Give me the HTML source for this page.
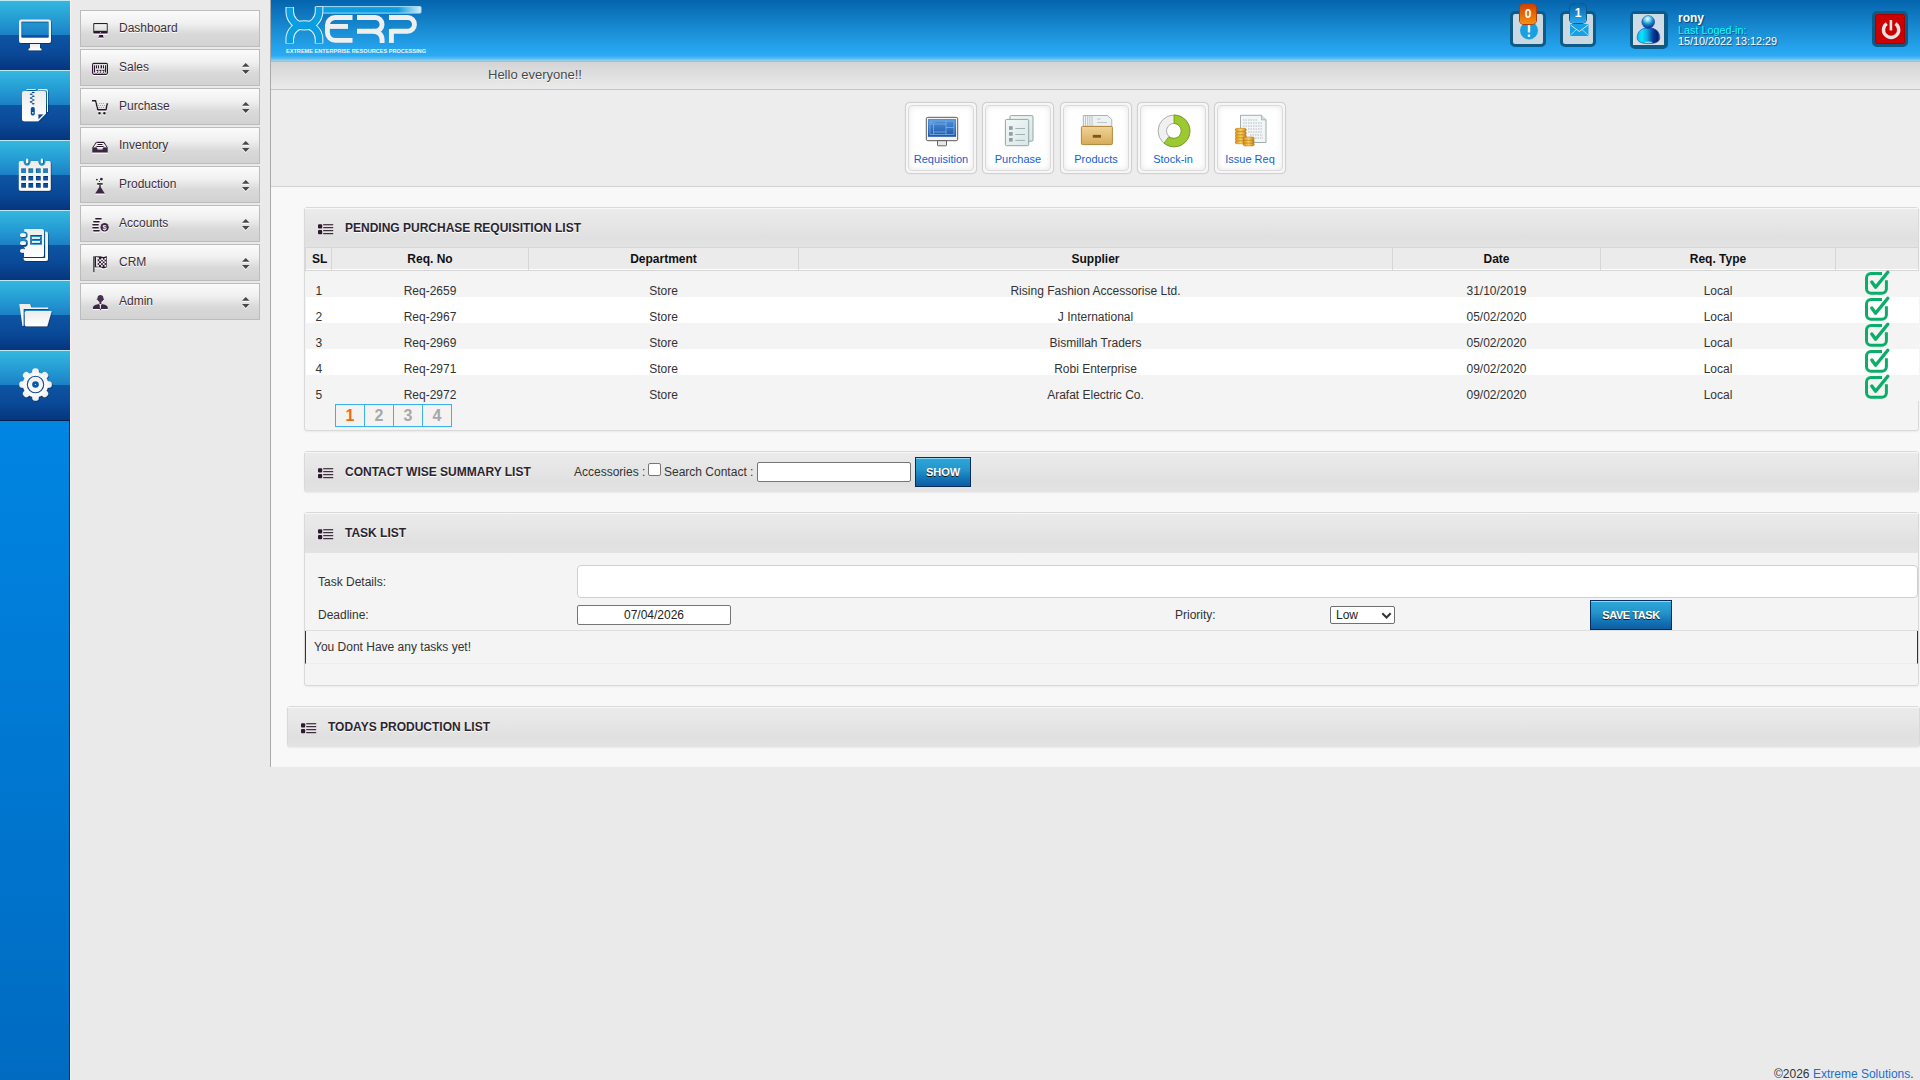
<!DOCTYPE html>
<html><head><meta charset="utf-8"><title>XERP</title>
<style>
*{box-sizing:border-box;margin:0;padding:0}
html,body{width:1920px;height:1080px;overflow:hidden;background:#eaeaea;font-family:"Liberation Sans",sans-serif;font-size:12px;color:#333}
.abs{position:absolute}
/* left bar */
#lbar{position:absolute;left:0;top:0;width:70px;height:1080px;background:linear-gradient(#0085e3 421px,#006bc1 1080px);border-right:1px solid #06325f}
#lbar2{position:absolute;left:70px;top:0;width:1px;height:1080px;background:#f6f0ee}
.tile{position:absolute;left:0;width:70px;height:70px;border-top:1px solid #bfe9f7;
 background:linear-gradient(#33b8e0 0%,#2398d2 30%,#1c80c6 49%,#0d54a3 50%,#0a4a98 75%,#06357f 100%)}
.tile svg{position:absolute;left:0;top:0}
/* menu */
.mbtn{position:absolute;left:80px;width:180px;height:37px;border:1px solid #bcbcbc;background:linear-gradient(#fbfbfb,#f0f0f0 35%,#d9d9d9 65%,#d2d2d2);}
.mbtn .t{position:absolute;left:38px;top:10px;font-size:12px;color:#3b2e3b;text-shadow:0 1px 0 #fff}
.mbtn svg.i{position:absolute;left:11px;top:9px}
.mbtn .ar{position:absolute;left:161px;top:15px}
#vline{position:absolute;left:270px;top:0;width:1px;height:767px;background:#a9a9a9}
/* header */
#hdr{position:absolute;left:271px;top:0;width:1649px;height:61px;background:linear-gradient(#0464ad 0%,#1a8dd4 50%,#29acf5 91%,#4fb8f0 95%,#9fd0ea 100%)}
#gbar{position:absolute;left:271px;top:61px;width:1649px;height:29px;border-top:1px solid #bdb9b9;border-bottom:1px solid #c4c4c4;background:linear-gradient(#d4d4d4,#ebebeb)}
#hello{position:absolute;left:488px;top:67px;font-size:13px;color:#484848;text-shadow:0 1px 1px #fff}
#tbar{position:absolute;left:271px;top:90px;width:1649px;height:97px;background:#ededed;border-bottom:1px solid #d2d2d2}
#content{position:absolute;left:271px;top:187px;width:1649px;height:580px;background:#f8f8f8}
.qb{position:absolute;top:102px;width:72px;height:72px;border:1px solid #d0d0d0;border-radius:5px;background:#f6f6f6;padding:2px;box-shadow:0 0 1px #ccc}
.qb .in{position:absolute;left:2px;top:2px;right:2px;bottom:2px;border:1px solid #dadada;border-radius:4px;background:#fff;box-shadow:inset 0 0 6px #e6e6e6}
.qb .lbl{position:absolute;left:0;right:0;top:50px;text-align:center;font-size:11px;color:#1262cc}
.qb svg{position:absolute;left:19px;top:11px}
/* notif */
.nbox{position:absolute;top:11px;width:36px;height:36px;border:3px solid #0d5b88;border-radius:5px;background:#c9d8e1}
.badge{position:absolute;width:18px;height:20px;border-radius:4px;color:#fff;font-weight:bold;font-size:12px;text-align:center;line-height:20px}
/* panels */
.panel{position:absolute;left:304px;width:1615px;border:1px solid #d9d9d9;border-radius:3px;background:#f4f4f4;box-shadow:0 1px 2px rgba(0,0,0,0.06)}
.ph{position:absolute;left:0;top:0;right:0;height:40px;background:linear-gradient(#ebebeb,#e6e6e6 40%,#e0e0e0 75%,#e3e3e3);box-shadow:inset 0 1px 0 #f7f7f7}
.ph .tt{position:absolute;left:40px;top:13px;font-size:12px;font-weight:bold;color:#2b2530;text-shadow:0 1px 0 #fff;letter-spacing:0}
.ph svg{position:absolute;left:13px;top:16px}
table.rq{position:absolute;left:0;top:39px;border-collapse:collapse;width:1613px;table-layout:fixed}
table.rq th{height:23px;background:#ebebeb;border:1px solid #d6d6d6;box-shadow:inset 0 -1px 0 #fff;font-weight:bold;font-size:12px;color:#111;text-align:center;padding:0}
table.rq td{height:26px;text-align:center;font-size:12px;color:#333;padding:0;vertical-align:bottom;line-height:12px}
table.rq tr.o td{background:#f4f4f4}
table.rq tr.e td{background:#fff}
.pg{position:absolute;top:404px;width:30px;height:23px;border:1px solid #39b3e6;text-align:center;font-weight:bold;font-size:16px;line-height:22px;color:#a8a8a8;background:#f5f3f2}
.btnb{position:absolute;border:1px solid #062d5e;background:linear-gradient(#2ea7da,#2496cc 40%,#1477b8 70%,#0f5ca2);box-shadow:inset 0 1px 0 #92d6f4;color:#fff;font-weight:bold;font-size:11px;text-align:center;text-shadow:0 1px 0 #1a1a1a}
</style></head>
<body>
<div id="lbar"></div><div id="lbar2"></div>
<div class="tile" style="top:0"></div>
<div class="tile" style="top:70px"></div>
<div class="tile" style="top:140px"></div>
<div class="tile" style="top:210px"></div>
<div class="tile" style="top:280px"></div>
<div class="tile" style="top:350px;border-bottom:1px solid #05204a;height:71px"></div>


<!-- tile icons -->
<svg class="abs" style="left:0;top:0" width="70" height="420" viewBox="0 0 70 420">
 <defs>
  <filter id="tsh" x="-20%" y="-20%" width="140%" height="140%"><feDropShadow dx="0.6" dy="0.8" stdDeviation="0.7" flood-color="#042050" flood-opacity="0.7"/></filter>
  <linearGradient id="wg" x1="0" y1="0" x2="0" y2="1"><stop offset="0" stop-color="#ececec"/><stop offset="1" stop-color="#ffffff"/></linearGradient>
 </defs>
 <g filter="url(#tsh)" fill="url(#wg)">
  <!-- monitor -->
  <path fill-rule="evenodd" d="M21.5,19.5 H48.5 A2.5,2.5 0 0 1 51,22 V40.5 A2.5,2.5 0 0 1 48.5,43 H21.5 A2.5,2.5 0 0 1 19,40.5 V22 A2.5,2.5 0 0 1 21.5,19.5 Z M22.5,21.5 A1,1 0 0 0 21.2,22.5 V36.6 A1,1 0 0 0 22.5,37.8 H47.5 A1,1 0 0 0 48.8,36.6 V22.5 A1,1 0 0 0 47.5,21.5 Z"/>
  <path d="M30,44 H40 V48 L41.5,49 V50.2 H28.5 V49 L30,48 Z"/>
  <!-- zip -->
  <path d="M26.5,89 H35.5 V90 H26.5 Z M38,89 H46 A2,2 0 0 1 48,91 V112 H47 V91.8 A1.5,1.5 0 0 0 45.5,90.3 H38 Z" />
  <path fill-rule="evenodd" d="M24,91 H44 A2,2 0 0 1 46,93 V113.5 L38.3,121.2 H24 A2,2 0 0 1 22,119.2 V93 A2,2 0 0 1 24,91 Z M38.3,114.3 V119.5 L43.6,114.3 Z"/>
  
  <path fill-rule="evenodd" d="M20.5,161 H23.4 A3.7,4.8 0 0 0 30.8,161 H38.2 A3.7,4.8 0 0 0 45.6,161 H49 A1.7,1.7 0 0 1 50.7,162.7 V189 A1.7,1.7 0 0 1 49,190.7 H20.5 A1.7,1.7 0 0 1 18.8,189 V162.7 A1.7,1.7 0 0 1 20.5,161 Z
   M21.1,168.3 h4.9 v4.6 h-4.9 Z M28.3,168.3 h4.9 v4.6 h-4.9 Z M35.9,168.3 h4.9 v4.6 h-4.9 Z M43.1,168.3 h4.9 v4.6 h-4.9 Z
   M21.1,175.9 h4.9 v4.6 h-4.9 Z M28.3,175.9 h4.9 v4.6 h-4.9 Z M35.9,175.9 h4.9 v4.6 h-4.9 Z M43.1,175.9 h4.9 v4.6 h-4.9 Z
   M21.1,183.1 h4.9 v4.6 h-4.9 Z M28.3,183.1 h4.9 v4.6 h-4.9 Z M35.9,183.1 h4.9 v4.6 h-4.9 Z M43.1,183.1 h4.9 v4.6 h-4.9 Z"/>
  <rect x="26" y="158.6" width="2.2" height="4.7" rx="1"/>
  <rect x="40.8" y="158.6" width="2.2" height="4.7" rx="1"/>
  <!-- notebook -->
  <path fill-rule="evenodd" d="M24.5,229 H42 A2,2 0 0 1 44,231 V255 A2,2 0 0 1 42,257 H24 V251.5 A3.2,3.2 0 0 0 24,247 V247 A3.2,3.2 0 0 0 24,239 A3.2,3.2 0 0 0 24,231.5 Z M30.1,235 H42 V244.8 H30.1 Z"/>
  <path d="M45.2,231.5 A2.5,2.5 0 0 1 48,234 V258.5 A2.5,2.5 0 0 1 45.5,261 H26.5 A3,3 0 0 1 23.5,258 H45.2 Z"/>
  <ellipse cx="23" cy="235" rx="3" ry="2"/><ellipse cx="23" cy="243" rx="3" ry="2"/><ellipse cx="23" cy="250.8" rx="3" ry="2"/>
  <rect x="32" y="237" width="8" height="1.8"/><rect x="32" y="241" width="8" height="1.8"/>
  <!-- folder -->
  <path d="M19.3,304 H30 L31.3,307.5 H47 A0.8,0.8 0 0 1 47.8,309 H23.5 V326 H22.5 Z"/>
  <path d="M26.3,311 H51.7 L47.2,326.2 H26.3 A1.5,1.5 0 0 1 24.8,324.7 V312.5 A1.5,1.5 0 0 1 26.3,311 Z"/>
  <!-- gear -->
  <circle cx="35.5" cy="384.5" r="12.6"/><rect x="32.2" y="368.2" width="6.6" height="8" rx="3" transform="rotate(0 35.5 384.5)"/><rect x="32.2" y="368.2" width="6.6" height="8" rx="3" transform="rotate(45 35.5 384.5)"/><rect x="32.2" y="368.2" width="6.6" height="8" rx="3" transform="rotate(90 35.5 384.5)"/><rect x="32.2" y="368.2" width="6.6" height="8" rx="3" transform="rotate(135 35.5 384.5)"/><rect x="32.2" y="368.2" width="6.6" height="8" rx="3" transform="rotate(180 35.5 384.5)"/><rect x="32.2" y="368.2" width="6.6" height="8" rx="3" transform="rotate(225 35.5 384.5)"/><rect x="32.2" y="368.2" width="6.6" height="8" rx="3" transform="rotate(270 35.5 384.5)"/><rect x="32.2" y="368.2" width="6.6" height="8" rx="3" transform="rotate(315 35.5 384.5)"/>
 </g>
<g fill="#0a4f98">
  <ellipse cx="33.2" cy="92.5" rx="1.5" ry="0.8"/><ellipse cx="31.2" cy="94.3" rx="1.5" ry="0.8"/><ellipse cx="33.2" cy="96.2" rx="1.5" ry="0.8"/><ellipse cx="31.2" cy="98.1" rx="1.5" ry="0.8"/><ellipse cx="33.2" cy="100" rx="1.5" ry="0.8"/><ellipse cx="31.2" cy="101.9" rx="1.5" ry="0.8"/><ellipse cx="33.2" cy="103.7" rx="1.5" ry="0.8"/>
  <rect x="30.8" y="107" width="4" height="8.5" rx="1.8"/></g><rect x="32" y="112" width="1.6" height="1.6" fill="#c8d8e8"/>
<circle cx="35.5" cy="384.5" r="8.2" fill="none" stroke="#0c4a94" stroke-width="1.1"/><circle cx="35.5" cy="384.5" r="3.3" fill="#0c56a6"/><circle cx="35.5" cy="384.5" r="0.6" fill="#f0f0f0"/>
</svg>
<div id="vline"></div>
<div id="hdr"></div>
<div id="gbar"></div>
<div id="hello">Hello everyone!!</div>
<div id="tbar"></div>
<div id="content"></div>


<!-- logo -->
<svg class="abs" style="left:271px;top:0" width="200" height="60" viewBox="271 0 200 60">
 <defs><linearGradient id="barg" x1="0" x2="1" y1="0" y2="0"><stop offset="0" stop-color="#0b9ee0"/><stop offset="0.78" stop-color="#0a9de0"/><stop offset="1" stop-color="#d6eef8"/></linearGradient></defs>
 <rect x="316" y="6.6" width="105" height="6.5" rx="1" fill="url(#barg)" stroke="#a8dcf3" stroke-width="1"/>
 <g fill="none" stroke-linecap="butt">
  <path d="M289.75,7.1 V11.6 A14.65,14.65 0 0 0 319.05,11.6 V6.6" stroke="#e2f2fa" stroke-width="8.6"/>
  <path d="M289.75,43.6 V39.3 A14.65,14.65 0 0 1 319.05,39.3 V43.6" stroke="#e2f2fa" stroke-width="8.6"/>
  <path d="M289.75,7.6 V11.6 A14.65,14.65 0 0 0 319.05,11.6 V7" stroke="#0a9ee0" stroke-width="6.6"/>
  <path d="M289.75,43.1 V39.3 A14.65,14.65 0 0 1 319.05,39.3 V43.1" stroke="#0a9ee0" stroke-width="6.6"/>
 </g>
 <g fill="none" stroke="#efefef" stroke-width="4.9">
  <path d="M352.5,17.55 H335.2 A7.8,7.8 0 0 0 327.4,25.35 V32.6 A7.8,7.8 0 0 0 335.2,40.4 H352.5"/>
  <path d="M327.4,26.45 H348"/>
  <path d="M357,17.55 H375.2 A6.85,6.85 0 0 1 375.2,31.25 H357"/>
  <path d="M373,31.25 A8.5,8.5 0 0 1 382.1,39.5 V42.9"/>
  <path d="M389,17.55 H407.6 A6.85,6.85 0 0 1 407.6,31.25 H391.4"/>
  <path d="M391.4,29 V42.9"/>
 </g>
 <text x="286" y="52.7" font-family="Liberation Sans" font-weight="bold" font-size="5.9" fill="#f4f4f4" textLength="140" lengthAdjust="spacingAndGlyphs">EXTREME ENTERPRISE RESOURCES PROCESSING</text>
</svg>

<!-- notifications -->
<div class="nbox" style="left:1510px"></div>
<svg class="abs" style="left:1519px;top:21px" width="20" height="20" viewBox="0 0 20 20"><circle cx="10" cy="9.5" r="9" fill="#17a0e2"/><rect x="8.8" y="3" width="2.4" height="8.5" fill="#f2f2f2"/><rect x="8.8" y="13.5" width="2.4" height="2.4" fill="#f2f2f2"/></svg>
<div class="badge" style="left:1520px;width:16px;top:4px;background:linear-gradient(#d13f00,#f5900f);box-shadow:0 0 0 1px #b33a05">0</div>
<div class="nbox" style="left:1560px"></div>
<svg class="abs" style="left:1570px;top:24px" width="19" height="12" viewBox="0 0 19 12"><rect x="0" y="0" width="18.5" height="12" rx="1" fill="#17a0e2"/><path d="M0.5,1 L9.25,7.5 L18,1" fill="none" stroke="#d9edf7" stroke-width="0.9"/><path d="M0.5,11 L6.5,5.5 M18,11 L12,5.5" stroke="#d9edf7" stroke-width="0.7"/></svg>
<div class="badge" style="left:1570px;width:16px;top:4px;height:19px;line-height:19px;background:linear-gradient(#0663a8,#2aa9ee);box-shadow:0 0 0 1px #0d5a85">1</div>

<!-- user -->
<div class="abs" style="left:1630px;top:11px;width:38px;height:38px;border:3px solid #0d5b88;border-radius:5px;background:#0d5b88"><div style="position:absolute;left:0;top:0;width:31px;height:31px;background:linear-gradient(#cadbe6,#d9dde0)"></div></div>
<svg class="abs" style="left:1634px;top:14px" width="30" height="31" viewBox="1634 14 30 31">
 <defs>
  <radialGradient id="uh" cx="0.45" cy="0.25" r="0.75"><stop offset="0" stop-color="#ffffff"/><stop offset="0.25" stop-color="#7fe0f8"/><stop offset="0.6" stop-color="#1584c8"/><stop offset="1" stop-color="#0a2f88"/></radialGradient>
  <linearGradient id="ub" x1="0" y1="0" x2="1" y2="0"><stop offset="0" stop-color="#10b8e8"/><stop offset="0.2" stop-color="#00eaff"/><stop offset="0.45" stop-color="#0fa6e0"/><stop offset="0.7" stop-color="#0a3c98"/><stop offset="0.9" stop-color="#06206a"/><stop offset="1" stop-color="#1a60c8"/></linearGradient>
 </defs>
 <path d="M1637.2,38 C1637.2,31 1642,27.8 1648.5,27.8 C1655,27.8 1659.8,31 1659.8,38 C1659.8,42 1655,43.6 1648.5,43.6 C1642,43.6 1637.2,42 1637.2,38 Z" fill="url(#ub)" stroke="#1a3cb0" stroke-width="0.6"/>
 <ellipse cx="1648.5" cy="42.3" rx="4" ry="0.9" fill="#a8e8ff" opacity="0.8"/>
 <circle cx="1648.2" cy="22" r="6.4" fill="url(#uh)" stroke="#1a3cb0" stroke-width="0.5"/>
</svg>
<div class="abs" style="left:1678px;top:11px;font-size:12px;font-weight:bold;color:#fff;line-height:14px;text-shadow:1px 1px 1px rgba(0,30,60,0.6)">rony</div>
<div class="abs" style="left:1678px;top:25px;font-size:10.8px;color:#00ffff;line-height:11px;text-shadow:1px 1px 1px rgba(0,30,60,0.6)">Last Loged-in:</div>
<div class="abs" style="left:1678px;top:36px;font-size:10.8px;color:#fff;line-height:11px;text-shadow:1px 1px 1px rgba(0,30,60,0.6)">15/10/2022 13:12:29</div>

<!-- power -->
<div class="abs" style="left:1872px;top:11px;width:36px;height:36px;border:3px solid #0e5a86;border-radius:5px;background:#cc0000;box-shadow:inset 0 0 0 1px #a80000"></div>
<svg class="abs" style="left:1880px;top:19px" width="22" height="22" viewBox="0 0 22 22"><path d="M6.8,4.6 A7.6,7.6 0 1 0 15.4,4.6" fill="none" stroke="#e4e4e4" stroke-width="3.4"/><rect x="9.6" y="1" width="2.6" height="10.5" fill="#e4e4e4"/></svg>


<!-- quick buttons -->
<div class="qb" style="left:905px"><div class="in"></div><span class="lbl">Requisition</span></div>
<div class="qb" style="left:982px"><div class="in"></div><span class="lbl">Purchase</span></div>
<div class="qb" style="left:1060px"><div class="in"></div><span class="lbl">Products</span></div>
<div class="qb" style="left:1137px"><div class="in"></div><span class="lbl">Stock-in</span></div>
<div class="qb" style="left:1214px"><div class="in"></div><span class="lbl">Issue Req</span></div>
<svg class="abs" style="left:900px;top:110px" width="390" height="40" viewBox="900 110 390 40">
 <defs>
  <linearGradient id="scr" x1="0" y1="0" x2="0" y2="1"><stop offset="0" stop-color="#4f95dc"/><stop offset="1" stop-color="#1d55a8"/></linearGradient>
  <linearGradient id="doc" x1="0" y1="0" x2="1" y2="1"><stop offset="0" stop-color="#f4f8f8"/><stop offset="1" stop-color="#d8e6e6"/></linearGradient>
  <linearGradient id="box" x1="0" y1="0" x2="0" y2="1"><stop offset="0" stop-color="#f0d498"/><stop offset="1" stop-color="#d8aa58"/></linearGradient>
  <linearGradient id="gold" x1="0" y1="0" x2="1" y2="0"><stop offset="0" stop-color="#d89018"/><stop offset="0.5" stop-color="#f8d060"/><stop offset="1" stop-color="#c88010"/></linearGradient>
 </defs>
 <!-- monitor -->
 <rect x="926.3" y="117.3" width="31.4" height="23.4" rx="1.5" fill="#f2f2f2" stroke="#5a5a5a" stroke-width="1"/>
 <rect x="928" y="119" width="28" height="17.8" fill="url(#scr)"/>
 <g fill="none" stroke="#8cb8e8" stroke-width="0.7"><rect x="930" y="121" width="24" height="13.5"/><path d="M930,124 H946 M946,121 V134.5 M933.5,124 V134.5 M946,127.5 H954 M933.5,132 H946"/></g>
 <g fill="#a8c8f0"><circle cx="931.5" cy="122.5" r="0.45"/><circle cx="932.9" cy="122.5" r="0.45"/><circle cx="934.3" cy="122.5" r="0.45"/></g>
 <path d="M937.5,140.7 H946.5 V145 A0.8,0.8 0 0 1 945.7,145.8 H938.3 A0.8,0.8 0 0 1 937.5,145 Z" fill="#e8e8e8" stroke="#555" stroke-width="0.9"/>
 <!-- documents -->
 <rect x="1010" y="115.6" width="23" height="25.6" rx="1.2" fill="url(#doc)" stroke="#8a9c9c" stroke-width="0.9"/>
 <rect x="1005.4" y="119.4" width="23.3" height="26.3" rx="1.2" fill="url(#doc)" stroke="#8a9c9c" stroke-width="0.9"/>
 <g fill="#8f9f9f"><rect x="1009" y="126.2" width="3.7" height="3.6"/><rect x="1009" y="132.1" width="3.7" height="3.6"/><rect x="1009" y="138" width="3.7" height="3.6"/></g>
 <g stroke="#9aaaaa" stroke-width="0.9"><path d="M1015.3,128.5 H1025 M1015.3,134.5 H1025 M1015.3,140.4 H1025"/></g>
 <!-- products drawer -->
 <path d="M1083.3,126.5 V115.5 H1107.5 L1111.8,119.5 V126.5 Z" fill="#eef2f2" stroke="#8a9a9a" stroke-width="0.7"/>
 <g stroke="#9aa8a8" stroke-width="0.6"><path d="M1085.5,116 V126 M1087.7,116 V126 M1089.9,116 V126 M1092.1,116 V126"/><path d="M1097,119 H1100.5 M1097,122.5 H1107" /></g>
 <rect x="1081.4" y="126.4" width="31" height="18.2" rx="1" fill="url(#box)" stroke="#a87e30" stroke-width="0.9"/>
 <rect x="1092.8" y="134.9" width="8.2" height="2.8" fill="#7a5818"/>
 <!-- donut -->
 <circle cx="1174" cy="130.9" r="11.7" fill="none" stroke="#f0f0f0" stroke-width="8.4"/>
 <circle cx="1174" cy="130.9" r="15.9" fill="none" stroke="#9a9a9a" stroke-width="0.8"/>
 <circle cx="1174" cy="130.9" r="7.5" fill="none" stroke="#9a9a9a" stroke-width="0.8"/>
 <path d="M1174,115 A15.9,15.9 0 1 1 1164,143.2 L1168.9,136.7 A7.5,7.5 0 1 0 1174,123.4 Z" fill="#9cc830" stroke="#6e9818" stroke-width="0.8"/>
 <!-- issue req -->
 <path d="M1240.5,115.3 H1261.5 L1266,119.8 V142.5 H1240.5 Z" fill="#f2f6f6" stroke="#8a9a9a" stroke-width="0.8"/>
 <path d="M1261.5,115.3 V119.8 H1266" fill="#d8e0e0" stroke="#8a9a9a" stroke-width="0.6"/>
 <g stroke="#9aa8b0" stroke-width="0.7" stroke-dasharray="1.5 1"><path d="M1243,120 H1258 M1243,123 H1263 M1243,126 H1263 M1248,129 H1263 M1248,132 H1263 M1250,135 H1263 M1255,138 H1263"/></g>
 <g fill="url(#gold)" stroke="#b07010" stroke-width="0.5">
  <rect x="1235.3" y="140.5" width="11" height="3.3" rx="1.6"/><rect x="1235.3" y="137.5" width="11" height="3.3" rx="1.6"/><rect x="1235.3" y="134.5" width="11" height="3.3" rx="1.6"/><rect x="1235.3" y="131.5" width="11" height="3.3" rx="1.6"/><rect x="1235.3" y="128.3" width="11" height="3.3" rx="1.6"/>
  <rect x="1243.2" y="142.6" width="11" height="3.3" rx="1.6"/><rect x="1243.2" y="139.8" width="11" height="3.3" rx="1.6"/><rect x="1243.2" y="137" width="11" height="3.3" rx="1.6"/>
 </g>
</svg>

<!-- menu -->
<div class="mbtn" style="top:10px"><span class="t">Dashboard</span></div>
<div class="mbtn" style="top:49px"><span class="t">Sales</span><svg class="ar" width="10" height="14" viewBox="0 0 10 14" style="position:absolute;left:160px;top:12px;overflow:visible"><path d="M1,4.7 L4.75,1 L8.5,4.7 Z M1,7.9 H8.5 L4.75,12 Z" fill="#474747" style="filter:drop-shadow(0 1px 0 #fff)"/></svg></div>
<div class="mbtn" style="top:88px"><span class="t">Purchase</span><svg class="ar" width="10" height="14" viewBox="0 0 10 14" style="position:absolute;left:160px;top:12px;overflow:visible"><path d="M1,4.7 L4.75,1 L8.5,4.7 Z M1,7.9 H8.5 L4.75,12 Z" fill="#474747" style="filter:drop-shadow(0 1px 0 #fff)"/></svg></div>
<div class="mbtn" style="top:127px"><span class="t">Inventory</span><svg class="ar" width="10" height="14" viewBox="0 0 10 14" style="position:absolute;left:160px;top:12px;overflow:visible"><path d="M1,4.7 L4.75,1 L8.5,4.7 Z M1,7.9 H8.5 L4.75,12 Z" fill="#474747" style="filter:drop-shadow(0 1px 0 #fff)"/></svg></div>
<div class="mbtn" style="top:166px"><span class="t">Production</span><svg class="ar" width="10" height="14" viewBox="0 0 10 14" style="position:absolute;left:160px;top:12px;overflow:visible"><path d="M1,4.7 L4.75,1 L8.5,4.7 Z M1,7.9 H8.5 L4.75,12 Z" fill="#474747" style="filter:drop-shadow(0 1px 0 #fff)"/></svg></div>
<div class="mbtn" style="top:205px"><span class="t">Accounts</span><svg class="ar" width="10" height="14" viewBox="0 0 10 14" style="position:absolute;left:160px;top:12px;overflow:visible"><path d="M1,4.7 L4.75,1 L8.5,4.7 Z M1,7.9 H8.5 L4.75,12 Z" fill="#474747" style="filter:drop-shadow(0 1px 0 #fff)"/></svg></div>
<div class="mbtn" style="top:244px"><span class="t">CRM</span><svg class="ar" width="10" height="14" viewBox="0 0 10 14" style="position:absolute;left:160px;top:12px;overflow:visible"><path d="M1,4.7 L4.75,1 L8.5,4.7 Z M1,7.9 H8.5 L4.75,12 Z" fill="#474747" style="filter:drop-shadow(0 1px 0 #fff)"/></svg></div>
<div class="mbtn" style="top:283px"><span class="t">Admin</span><svg class="ar" width="10" height="14" viewBox="0 0 10 14" style="position:absolute;left:160px;top:12px;overflow:visible"><path d="M1,4.7 L4.75,1 L8.5,4.7 Z M1,7.9 H8.5 L4.75,12 Z" fill="#474747" style="filter:drop-shadow(0 1px 0 #fff)"/></svg></div>


<!-- panel 1 -->
<div class="panel" style="top:207px;height:224px">
 <div class="ph"><svg width="16" height="11" viewBox="0 0 16 11"><g fill="#2d1930"><rect x="0" y="0.2" width="4.2" height="4.2" rx="1"/><rect x="0" y="6" width="4.2" height="4.2" rx="1"/><rect x="5.2" y="0.2" width="10" height="1.1"/><rect x="5.2" y="3.1" width="10" height="1.1"/><rect x="5.2" y="6.1" width="10" height="1.1"/><rect x="5.2" y="9.1" width="10" height="1.1"/></g></svg><span class="tt">PENDING PURCHASE REQUISITION LIST</span></div>
 <table class="rq">
  <colgroup><col style="width:26px"><col style="width:197px"><col style="width:270px"><col style="width:594px"><col style="width:208px"><col style="width:235px"><col style="width:83px"></colgroup>
  <tr><th style="text-align:left;padding-left:6px">SL</th><th>Req. No</th><th>Department</th><th>Supplier</th><th>Date</th><th>Req. Type</th><th></th></tr>
  <tr class="o"><td style="text-align:left;padding-left:10px">1</td><td>Req-2659</td><td>Store</td><td>Rising Fashion Accessorise Ltd.</td><td>31/10/2019</td><td>Local</td><td></td></tr>
  <tr class="e"><td style="text-align:left;padding-left:10px">2</td><td>Req-2967</td><td>Store</td><td>J International</td><td>05/02/2020</td><td>Local</td><td></td></tr>
  <tr class="o"><td style="text-align:left;padding-left:10px">3</td><td>Req-2969</td><td>Store</td><td>Bismillah Traders</td><td>05/02/2020</td><td>Local</td><td></td></tr>
  <tr class="e"><td style="text-align:left;padding-left:10px">4</td><td>Req-2971</td><td>Store</td><td>Robi Enterprise</td><td>09/02/2020</td><td>Local</td><td></td></tr>
  <tr class="o"><td style="text-align:left;padding-left:10px">5</td><td>Req-2972</td><td>Store</td><td>Arafat Electric Co.</td><td>09/02/2020</td><td>Local</td><td></td></tr>
 </table>
</div>
<svg class="abs" style="left:1860px;top:266px" width="36" height="140" viewBox="1860 266 36 140"><g fill="none" stroke="#0bae68" stroke-width="3"><g transform="translate(0,0)"><path d="M1882,273.5 H1871 A4.5,4.5 0 0 0 1866.5,278 V288.8 A4.5,4.5 0 0 0 1871,293.3 H1881.9 A4.5,4.5 0 0 0 1886.4,288.8 V280.3"/><path d="M1871.8,282 L1875.6,287.2 L1887.8,272.2" stroke-width="3.4" stroke-linecap="round" stroke-linejoin="round"/></g><g transform="translate(0,26)"><path d="M1882,273.5 H1871 A4.5,4.5 0 0 0 1866.5,278 V288.8 A4.5,4.5 0 0 0 1871,293.3 H1881.9 A4.5,4.5 0 0 0 1886.4,288.8 V280.3"/><path d="M1871.8,282 L1875.6,287.2 L1887.8,272.2" stroke-width="3.4" stroke-linecap="round" stroke-linejoin="round"/></g><g transform="translate(0,52)"><path d="M1882,273.5 H1871 A4.5,4.5 0 0 0 1866.5,278 V288.8 A4.5,4.5 0 0 0 1871,293.3 H1881.9 A4.5,4.5 0 0 0 1886.4,288.8 V280.3"/><path d="M1871.8,282 L1875.6,287.2 L1887.8,272.2" stroke-width="3.4" stroke-linecap="round" stroke-linejoin="round"/></g><g transform="translate(0,78)"><path d="M1882,273.5 H1871 A4.5,4.5 0 0 0 1866.5,278 V288.8 A4.5,4.5 0 0 0 1871,293.3 H1881.9 A4.5,4.5 0 0 0 1886.4,288.8 V280.3"/><path d="M1871.8,282 L1875.6,287.2 L1887.8,272.2" stroke-width="3.4" stroke-linecap="round" stroke-linejoin="round"/></g><g transform="translate(0,104)"><path d="M1882,273.5 H1871 A4.5,4.5 0 0 0 1866.5,278 V288.8 A4.5,4.5 0 0 0 1871,293.3 H1881.9 A4.5,4.5 0 0 0 1886.4,288.8 V280.3"/><path d="M1871.8,282 L1875.6,287.2 L1887.8,272.2" stroke-width="3.4" stroke-linecap="round" stroke-linejoin="round"/></g></g></svg>
<div class="pg" style="left:335px;color:#f26a10">1</div>
<div class="pg" style="left:364px">2</div>
<div class="pg" style="left:393px">3</div>
<div class="pg" style="left:422px">4</div>

<!-- panel 2 -->
<div class="panel" style="top:451px;height:41px">
 <div class="ph"><svg width="16" height="11" viewBox="0 0 16 11"><g fill="#2d1930"><rect x="0" y="0.2" width="4.2" height="4.2" rx="1"/><rect x="0" y="6" width="4.2" height="4.2" rx="1"/><rect x="5.2" y="0.2" width="10" height="1.1"/><rect x="5.2" y="3.1" width="10" height="1.1"/><rect x="5.2" y="6.1" width="10" height="1.1"/><rect x="5.2" y="9.1" width="10" height="1.1"/></g></svg><span class="tt">CONTACT WISE SUMMARY LIST</span></div>
</div>
<div class="abs" style="left:574px;top:465px;font-size:12px;color:#333">Accessories :</div>
<div class="abs" style="left:648px;top:463px;width:13px;height:13px;border:1px solid #767676;border-radius:2px;background:#fff"></div>
<div class="abs" style="left:664px;top:465px;font-size:12px;color:#333">Search Contact :</div>
<div class="abs" style="left:757px;top:462px;width:154px;height:20px;border:1px solid #767676;border-radius:2px;background:#fff"></div>
<div class="btnb" style="left:915px;top:457px;width:56px;height:30px;line-height:28px">SHOW</div>

<!-- panel 3 -->
<div class="panel" style="top:512px;height:174px">
 <div class="ph"><svg width="16" height="11" viewBox="0 0 16 11"><g fill="#2d1930"><rect x="0" y="0.2" width="4.2" height="4.2" rx="1"/><rect x="0" y="6" width="4.2" height="4.2" rx="1"/><rect x="5.2" y="0.2" width="10" height="1.1"/><rect x="5.2" y="3.1" width="10" height="1.1"/><rect x="5.2" y="6.1" width="10" height="1.1"/><rect x="5.2" y="9.1" width="10" height="1.1"/></g></svg><span class="tt">TASK LIST</span></div>
</div>
<div class="abs" style="left:318px;top:575px;font-size:12px;color:#333">Task Details:</div>
<div class="abs" style="left:577px;top:565px;width:1341px;height:33px;border:1px solid #cfcfcf;border-radius:4px;background:#fff"></div>
<div class="abs" style="left:318px;top:608px;font-size:12px;color:#333">Deadline:</div>
<div class="abs" style="left:577px;top:605px;width:154px;height:20px;border:1px solid #767676;border-radius:2px;background:#fff;text-align:center;font-size:12px;line-height:18px;color:#222">07/04/2026</div>
<div class="abs" style="left:1175px;top:608px;font-size:12px;color:#333">Priority:</div>
<div class="abs" style="left:1330px;top:606px;width:65px;height:18px;border:1px solid #707070;border-radius:2px;background:#fff;font-size:12px;line-height:16px;padding-left:5px;color:#222">Low<svg style="position:absolute;left:50px;top:5px" width="11" height="8" viewBox="0 0 11 8"><path d="M1.3,1.3 L5.5,5.5 L9.7,1.3" fill="none" stroke="#333" stroke-width="2"/></svg></div>
<div class="btnb" style="left:1590px;top:600px;width:82px;height:30px;line-height:28px;letter-spacing:-0.45px">SAVE TASK</div>
<div class="abs" style="left:305px;top:630px;width:1613px;height:1px;background:#dedede"></div>
<div class="abs" style="left:305px;top:631px;width:1613px;height:33px;border-left:1px solid #333;border-right:1px solid #333;border-bottom:1px solid #ededed"></div>
<div class="abs" style="left:314px;top:640px;font-size:12px;color:#333">You Dont Have any tasks yet!</div>

<!-- panel 4 -->
<div class="panel" style="left:287px;width:1633px;top:706px;height:41px">
 <div class="ph"><svg width="16" height="11" viewBox="0 0 16 11"><g fill="#2d1930"><rect x="0" y="0.2" width="4.2" height="4.2" rx="1"/><rect x="0" y="6" width="4.2" height="4.2" rx="1"/><rect x="5.2" y="0.2" width="10" height="1.1"/><rect x="5.2" y="3.1" width="10" height="1.1"/><rect x="5.2" y="6.1" width="10" height="1.1"/><rect x="5.2" y="9.1" width="10" height="1.1"/></g></svg><span class="tt">TODAYS PRODUCTION LIST</span></div>
</div>

<div class="abs" style="left:1774px;top:1067px;font-size:12px;color:#333">&copy;2026 <span style="color:#1a6fd0">Extreme Solutions</span>.</div>

<!-- menu icons -->
<svg class="abs" style="left:80px;top:0" width="40" height="330" viewBox="80 0 40 330">
 <defs><filter id="wsh" x="-30%" y="-30%" width="160%" height="160%"><feDropShadow dx="0" dy="0.9" stdDeviation="0.35" flood-color="#ffffff" flood-opacity="1"/></filter></defs>
 <g filter="url(#wsh)" fill="#2d1930">
  <!-- monitor -->
  <path fill-rule="evenodd" d="M94.2,22.9 H106.8 A1.1,1.1 0 0 1 107.9,24 V32.7 A1.1,1.1 0 0 1 106.8,33.8 H94.2 A1.1,1.1 0 0 1 93.1,32.7 V24 A1.1,1.1 0 0 1 94.2,22.9 Z M94.4,24.2 V30.8 H106.6 V24.2 Z"/>
  <circle cx="100.4" cy="32.5" r="0.5" fill="#eee"/>
  <path d="M99.1,35 H103.1 V36.3 L104,37.8 H98 L99.1,36.3 Z"/>
  <!-- barcode -->
  <path fill-rule="evenodd" d="M93.6,62.8 H106.4 A1.6,1.6 0 0 1 108,64.4 V73.3 A1.6,1.6 0 0 1 106.4,74.9 H93.6 A1.6,1.6 0 0 1 92,73.3 V64.4 A1.6,1.6 0 0 1 93.6,62.8 Z M93.3,64.2 V73.5 H106.7 V64.2 Z"/>
  <rect x="94" y="65.1" width="1.1" height="7.7" rx="0.5"/><rect x="105" y="65.1" width="1.1" height="7.7" rx="0.5"/>
  <rect x="95.9" y="65.1" width="1.1" height="3.6" rx="0.5"/><rect x="97.9" y="65.1" width="1.1" height="3.6" rx="0.5"/>
  <rect x="100.4" y="65.1" width="1.6" height="3.6"/><rect x="102.9" y="65.1" width="1.1" height="3.6" rx="0.5"/>
  <path d="M96.3,70.4 H98.1 L97.5,72.9 M99.3,70.4 H101.1 L100.3,72.9 M102.3,70.4 H104.1 L103.3,72.9" fill="none" stroke="#2d1930" stroke-width="1.1"/>
  <!-- cart -->
  <path d="M92,100.9 H95.6 L97.8,109.9 H106 L107.4,103.3" fill="none" stroke="#2d1930" stroke-width="1.7" stroke-linejoin="round"/>
  <circle cx="99.5" cy="113.4" r="1.4"/><circle cx="104.4" cy="113.4" r="1.4"/>
  <g><circle cx="99.5" cy="103.4" r="0.45"/><circle cx="101.5" cy="103.4" r="0.45"/><circle cx="103.5" cy="103.4" r="0.45"/>
  <circle cx="98.4" cy="105.4" r="0.45"/><circle cx="100.5" cy="105.4" r="0.45"/><circle cx="102.5" cy="105.4" r="0.45"/><circle cx="104.5" cy="105.4" r="0.45"/>
  <circle cx="99.5" cy="107.4" r="0.45"/><circle cx="101.5" cy="107.4" r="0.45"/><circle cx="103.5" cy="107.4" r="0.45"/></g>
  <!-- inbox -->
  <path d="M96.4,142.4 H103.8 L107.2,147.5" fill="none" stroke="#2d1930" stroke-width="1.1"/>
  <path d="M96.4,142.4 L92.9,147.5" fill="none" stroke="#2d1930" stroke-width="1.1"/>
  <path d="M92.1,147.2 H97 L97.8,149.4 H102.3 L103,147.2 H107.9 V152.7 H92.1 Z" fill="#3e2844"/>
  <rect x="97.3" y="144" width="5.4" height="0.9" rx="0.4"/><rect x="96.2" y="146" width="7.6" height="0.9" rx="0.4"/>
  <!-- flask -->
  <circle cx="96.9" cy="179.8" r="0.95"/><circle cx="101.4" cy="179.3" r="1.45" fill="#3e2844"/><circle cx="99.4" cy="181.4" r="0.6"/>
  <rect x="97.1" y="183.1" width="5.6" height="1.8"/>
  <path d="M99.1,184.9 H100.9 V187.2 L105,193.7 H95 L99.1,187.2 Z" fill="#3e2844"/>
  <!-- coins -->
  <rect x="95.1" y="218.1" width="6.7" height="1.6" rx="0.6"/>
  <rect x="93.1" y="221.1" width="6.7" height="1.6" rx="0.6"/>
  <rect x="92.2" y="224.1" width="6.7" height="1.6" rx="0.6"/>
  <rect x="92.2" y="227.1" width="6.7" height="1.6" rx="0.6"/>
  <rect x="93.1" y="230.1" width="6.7" height="1.6" rx="0.6"/>
  <circle cx="104.6" cy="227.4" r="4.3" fill="#3e2844"/>
  <text x="104.6" y="230.2" font-family="Liberation Sans" font-weight="bold" font-size="7.5" fill="#e8e8e8" text-anchor="middle">$</text>
  <!-- flag -->
  <rect x="93.1" y="256.2" width="1.6" height="16.2" rx="0.5"/>
  <path fill-rule="evenodd" d="M94.5,256.2 H100.5 C102,256.2 102.5,257 104,257 C105,257 106,256.2 106.9,256 V267.6 C106,268 105,268.5 104,268.5 C102.5,268.5 101.5,267.4 100,267.4 H94.5 Z M96,257.2 V266.5 H97.5 V257.2 Z"/>
  <g fill="#f4f4f4"><rect x="97.2" y="257.5" width="1.8" height="1.8"/><rect x="101.2" y="258.2" width="1.8" height="1.8"/><rect x="104.5" y="258" width="1.6" height="1.8"/>
  <rect x="99.2" y="259.5" width="2" height="1.8"/><rect x="102.8" y="259.7" width="1.8" height="1.8"/>
  <rect x="97.2" y="261.3" width="1.8" height="1.8"/><rect x="101" y="261.3" width="1.8" height="1.8"/><rect x="104.5" y="261.3" width="1.6" height="1.8"/>
  <rect x="99.2" y="263.1" width="2" height="1.8"/><rect x="102.8" y="263.1" width="1.8" height="1.8"/>
  <rect x="97.2" y="264.9" width="1.8" height="1.8"/><rect x="101" y="265.1" width="1.8" height="1.6"/><rect x="104.5" y="264.9" width="1.6" height="1.8"/></g>
  <!-- admin -->
  <ellipse cx="100.4" cy="298.4" rx="3.1" ry="3.5" fill="#4a3050"/>
  <circle cx="97.3" cy="299.3" r="0.7" fill="#2d1930"/><circle cx="103.5" cy="299.3" r="0.7" fill="#2d1930"/>
  <rect x="99.2" y="301" width="2.4" height="3" fill="#4a3050"/>
  <path d="M92.9,308.9 V307.6 C92.9,305.6 95.8,304.4 99,303.9 L100.4,305.5 L101.8,303.9 C105,304.4 107.9,305.6 107.9,307.6 V308.9 Z" fill="#3e2844"/>
  <path d="M99.7,304.6 L100.4,304 L101.1,304.6 L100.9,308.4 L100.4,309 L99.9,308.4 Z" fill="#e6e6e6"/>
  <path d="M99.7,309 L100.4,311.3 L101.1,309 Z"/>
 </g>
</svg>
</body></html>
